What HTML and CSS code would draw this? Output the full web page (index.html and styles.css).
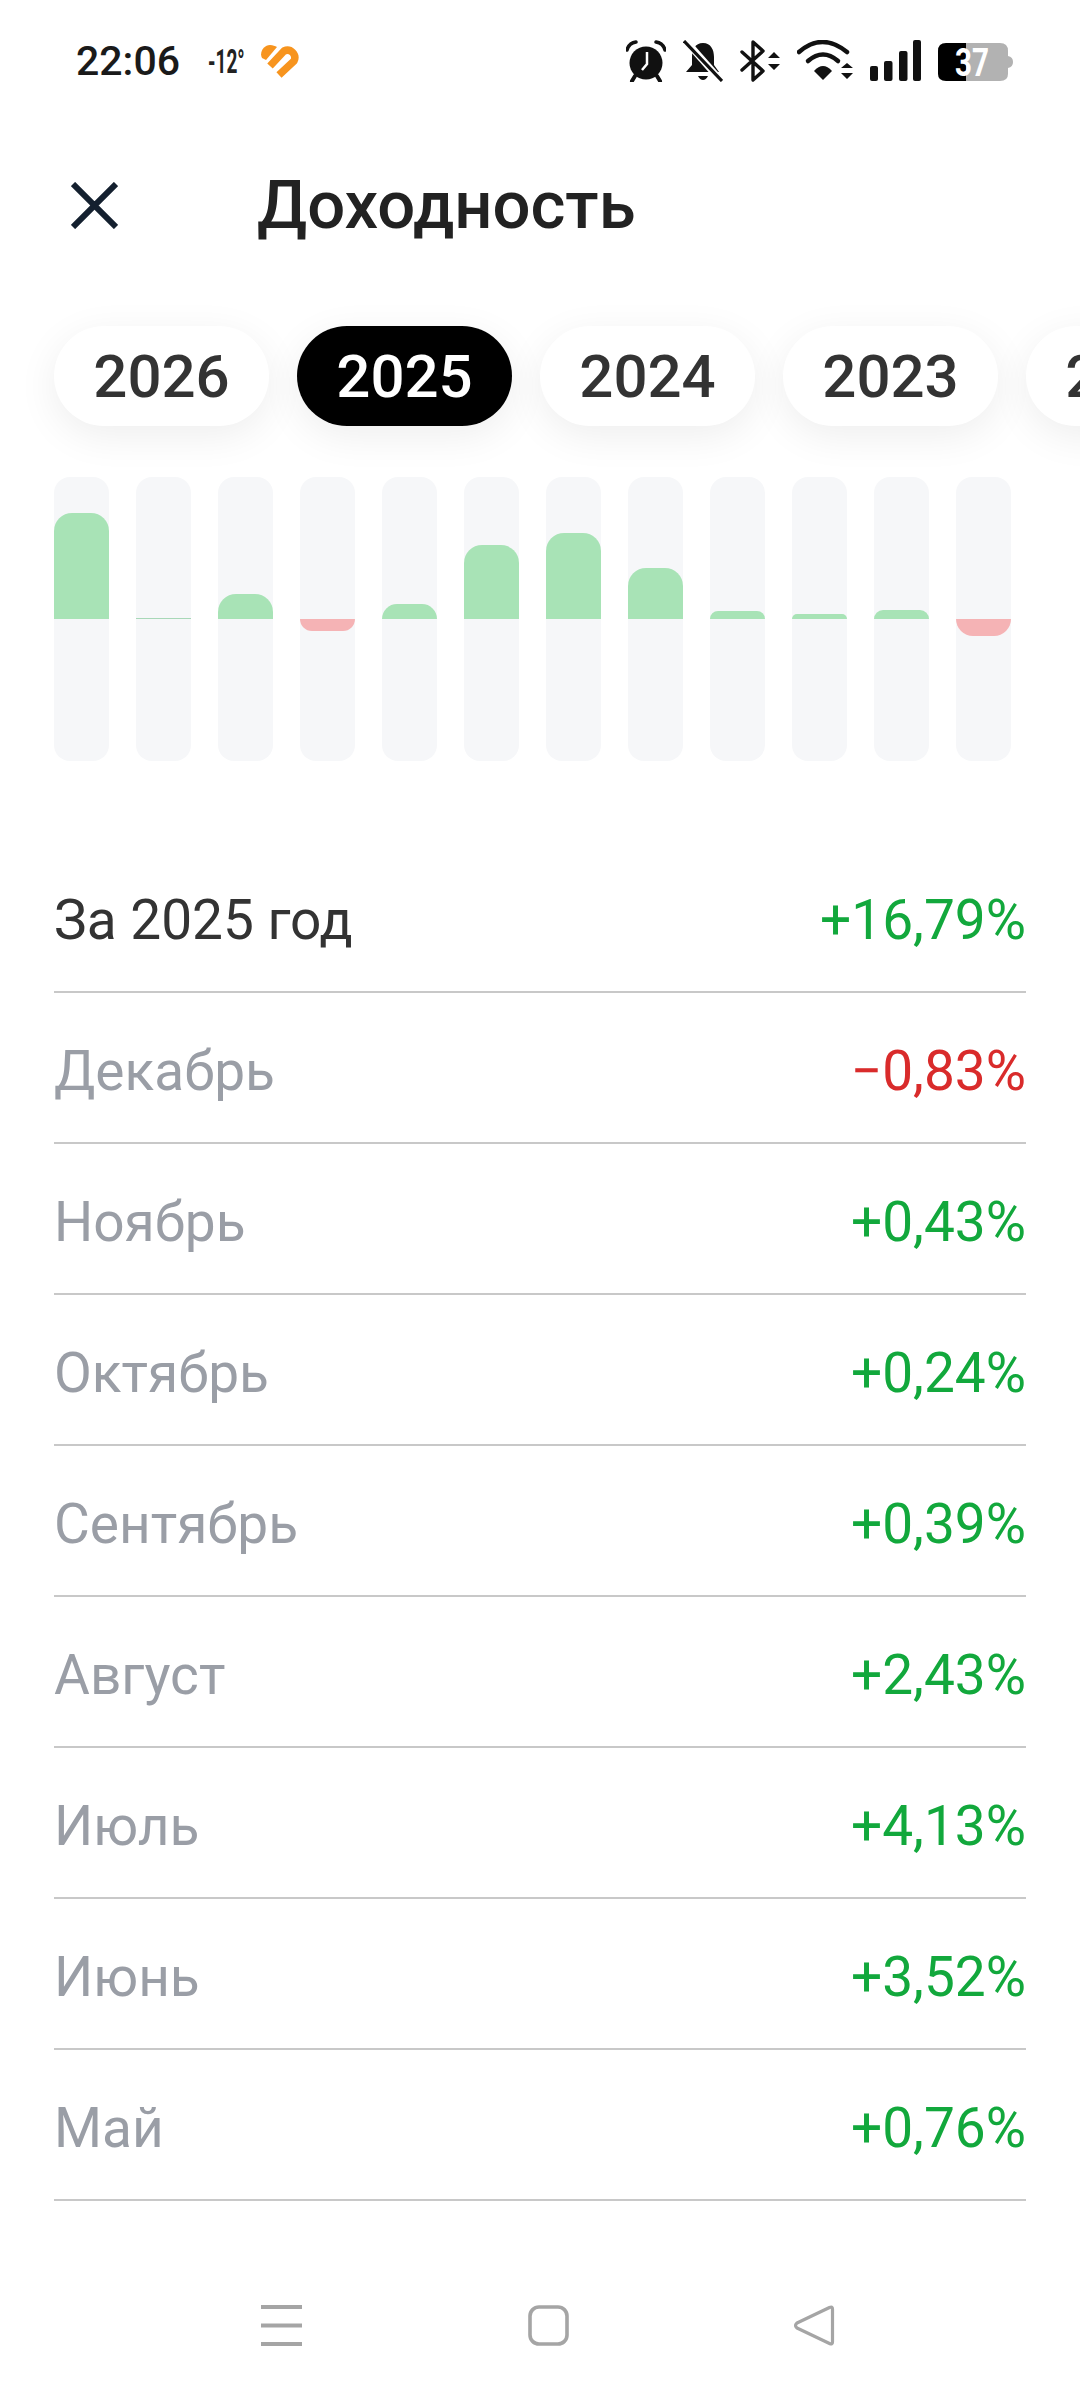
FILE: index.html
```html
<!DOCTYPE html>
<html lang="ru">
<head>
    <meta charset="UTF-8">
    <meta name="viewport" content="width=device-width, initial-scale=1.0">
    <title>Доходность</title>
    <link rel="stylesheet" href="styles.css">
</head>
<body>
    <div class="status-bar">
        <div class="status-left">
            <span class="status-time">22:06</span>
            <span class="status-temp">-12°</span>
            <svg class="status-heart" width="38" height="33" viewBox="0 0 38 33">
                <path d="M1 13 C-2 7 3 0 9 0 C12 0 14 1 16 2 L5 15 Z" fill="#f7941e"/>
                <path d="M9 21 L23 6 A7.500 7.500 0 0 1 33 16 L18 30" fill="none" stroke="#f7941e" stroke-width="7.500"/>
            </svg>
        </div>
        <div class="status-right">
            <!-- будильник -->
            <svg width="40" height="42" viewBox="0 0 40 42">
                <circle cx="20" cy="23" r="16.5" fill="#111"/>
                <path d="M21 12 V24 L16 30" fill="none" stroke="#fff" stroke-width="2.5"/>
                <path d="M1 10 Q3 3 10 2 M39 10 Q37 3 30 2" fill="none" stroke="#111" stroke-width="3.5" stroke-linecap="round"/>
                <path d="M9 36 L6 41 M31 36 L34 41" stroke="#111" stroke-width="4" stroke-linecap="round"/>
            </svg>
            <!-- звук выключен -->
            <svg width="40" height="42" viewBox="0 0 40 42">
                <path d="M20 3 C28 3 31 10 31 17 V25 L36 32 H3 L9 25 V17 C9 10 12 3 20 3 Z" fill="#111"/>
                <path d="M15 36 H25 Q23 40 20 40 Q17 40 15 36 Z" fill="#111"/>
                <path d="M2 0 L39 42" stroke="#fff" stroke-width="7"/>
                <path d="M1 1 L39 41" stroke="#111" stroke-width="3.2"/>
            </svg>
            <!-- bluetooth -->
            <svg width="40" height="42" viewBox="0 0 40 42">
                <path d="M2 12 L23 31 L13 40 V2 L23 11 L2 30" fill="none" stroke="#111" stroke-width="3.4" stroke-linecap="round" stroke-linejoin="round"/>
                <path d="M28 18 L34 12 L40 18 Z M28 24 H40 L34 30 Z" fill="#111"/>
            </svg>
            <!-- wifi -->
            <svg width="56" height="42" viewBox="0 0 56 42">
                <path d="M2 12 Q25 -8 50 12" fill="none" stroke="#111" stroke-width="4.5" stroke-linecap="round"/>
                <path d="M11 21 Q26 8 41 21" fill="none" stroke="#111" stroke-width="4.5" stroke-linecap="round"/>
                <path d="M17 31 Q26 21 35 31 L26 40 Z" fill="#111"/>
                <path d="M44 28 L50 23 L56 28 Z M44 33 H56 L50 39 Z" fill="#111"/>
            </svg>
            <!-- сигнал -->
            <svg width="51" height="42" viewBox="0 0 51 42">
                <rect x="0" y="26" width="8" height="15" rx="2" fill="#111"/>
                <rect x="14" y="21" width="8.5" height="20" rx="2" fill="#111"/>
                <rect x="29" y="11" width="8.5" height="30" rx="2" fill="#111"/>
                <rect x="43" y="0" width="8" height="41" rx="2" fill="#111"/>
            </svg>
            <!-- батарея -->
            <svg width="75" height="42" viewBox="0 0 75 42">
                <path d="M28 3 H62 Q70 3 70 11 V34 Q70 41 62 41 H28 Z" fill="#b2b2b2"/>
                <path d="M70 16 Q75 17 75 22 Q75 27 70 28 Z" fill="#b2b2b2"/>
                <path d="M28 3 H8 Q0 3 0 11 V34 Q0 41 8 41 H28 Z" fill="#000"/>
                <text class="battery-text" x="17" y="36" textLength="34" lengthAdjust="spacingAndGlyphs">37</text>
            </svg>
        </div>
    </div>

    <div class="header">
        <svg class="header-close" width="47" height="47" viewBox="0 0 47 47">
            <path d="M2 2 L45 45 M45 2 L2 45" fill="none" stroke="#14202f" stroke-width="6"/>
        </svg>
        <h1 class="header-title">Доходность</h1>
    </div>

    <div class="years">
        <div class="year">2026</div>
        <div class="year year-active">2025</div>
        <div class="year">2024</div>
        <div class="year">2023</div>
        <div class="year">2022</div>
    </div>

    <div class="chart">
        <div class="bar"><div class="bar-half bar-up"><div class="fill fill-plus" style="height:106px"></div></div><div class="bar-half"></div></div>
        <div class="bar"><div class="bar-half bar-up"><div class="fill fill-zero" style="height:1px"></div></div><div class="bar-half"></div></div>
        <div class="bar"><div class="bar-half bar-up"><div class="fill fill-plus" style="height:25px"></div></div><div class="bar-half"></div></div>
        <div class="bar"><div class="bar-half bar-up"></div><div class="bar-half"><div class="fill fill-minus" style="height:12px"></div></div></div>
        <div class="bar"><div class="bar-half bar-up"><div class="fill fill-plus" style="height:15px"></div></div><div class="bar-half"></div></div>
        <div class="bar"><div class="bar-half bar-up"><div class="fill fill-plus" style="height:74px"></div></div><div class="bar-half"></div></div>
        <div class="bar"><div class="bar-half bar-up"><div class="fill fill-plus" style="height:86px"></div></div><div class="bar-half"></div></div>
        <div class="bar"><div class="bar-half bar-up"><div class="fill fill-plus" style="height:51px"></div></div><div class="bar-half"></div></div>
        <div class="bar"><div class="bar-half bar-up"><div class="fill fill-plus" style="height:8px"></div></div><div class="bar-half"></div></div>
        <div class="bar"><div class="bar-half bar-up"><div class="fill fill-plus" style="height:5px"></div></div><div class="bar-half"></div></div>
        <div class="bar"><div class="bar-half bar-up"><div class="fill fill-plus" style="height:9px"></div></div><div class="bar-half"></div></div>
        <div class="bar"><div class="bar-half bar-up"></div><div class="bar-half"><div class="fill fill-minus" style="height:17px"></div></div></div>
    </div>

    <ul class="list">
        <li class="row row-total"><span>За 2025 год</span><span class="plus">+16,79%</span></li>
        <li class="row"><span>Декабрь</span><span class="minus">−0,83%</span></li>
        <li class="row"><span>Ноябрь</span><span class="plus">+0,43%</span></li>
        <li class="row"><span>Октябрь</span><span class="plus">+0,24%</span></li>
        <li class="row"><span>Сентябрь</span><span class="plus">+0,39%</span></li>
        <li class="row"><span>Август</span><span class="plus">+2,43%</span></li>
        <li class="row"><span>Июль</span><span class="plus">+4,13%</span></li>
        <li class="row"><span>Июнь</span><span class="plus">+3,52%</span></li>
        <li class="row"><span>Май</span><span class="plus">+0,76%</span></li>
    </ul>

    <div class="nav-bar">
        <svg width="41" height="41" viewBox="0 0 41 41">
            <path d="M0 2 H41 M0 20.500 H41 M0 39 H41" stroke="#a5a5a5" stroke-width="4"/>
        </svg>
        <svg width="41" height="41" viewBox="0 0 41 41">
            <rect x="2" y="2" width="37" height="37" rx="9" fill="none" stroke="#a5a5a5" stroke-width="3.6"/>
        </svg>
        <svg width="41" height="41" viewBox="0 0 41 41">
            <path d="M38.500 4 Q38.500 1 35.500 2.500 L3 18 Q0 20.500 3 23 L35.500 38.500 Q38.500 40 38.500 37 Z" fill="none" stroke="#a5a5a5" stroke-width="3.2" stroke-linejoin="round"/>
        </svg>
    </div>
</body>
</html>
```

FILE: styles.css
```css
* {
    margin: 0;
    padding: 0;
    box-sizing: border-box;
}

html,
body {
    width: 1080px;
    height: 2400px;
    overflow: hidden;
}

body {
    display: flex;
    flex-direction: column;
    font-family: Roboto, "Noto Sans", sans-serif;
    background-color: #fff;
}

.status-bar {
    height: 122px;
    flex: none;
    padding: 0 67px 0 76px;
    display: flex;
    align-items: center;
    justify-content: space-between;
}

.status-left {
    display: flex;
    align-items: center;
}

.status-time {
    font-size: 41px;
    font-weight: 500;
    color: #1a1a1a;
}

.status-temp {
    width: 34px;
    margin-left: 28px;
    font-size: 34px;
    font-weight: 700;
    white-space: nowrap;
    color: #222;
    transform: scaleX(.56);
    transform-origin: left center;
}

.status-heart {
    margin-left: 19px;
}

.status-right {
    display: flex;
    align-items: center;
    gap: 17px;
}

.battery-text {
    font-family: Roboto, sans-serif;
    font-size: 38px;
    font-weight: 700;
    fill: #fff;
}

.header {
    height: 166px;
    flex: none;
    padding-left: 71px;
    display: flex;
    align-items: center;
    gap: 139px;
}

.header-title {
    font-size: 67px;
    font-weight: 500;
    color: #222;
}

.years {
    flex: none;
    padding: 38px 0 46px 54px;
    display: flex;
    gap: 28px;
    overflow: hidden;
}

.year {
    width: 215px;
    height: 100px;
    flex: none;
    line-height: 102px;
    text-align: center;
    font-size: 60px;
    font-weight: 500;
    color: #333;
    border-radius: 50px;
    background-color: #fff;
    box-shadow: 0 10px 40px rgba(0,0,0,.07);
}

.year-active {
    color: #fff;
    background-color: #000;
}

.chart {
    height: 284px;
    flex: none;
    margin: 5px 0 81px;
    padding: 0 69px 0 54px;
    display: flex;
    justify-content: space-between;
}

.bar {
    width: 55px;
    display: flex;
    flex-direction: column;
    border-radius: 16px;
    overflow: hidden;
    background-color: #f6f7f9;
}

.bar-half {
    height: 142px;
    display: flex;
    flex-direction: column;
}

.bar-up {
    justify-content: flex-end;
}

.fill-plus {
    border-radius: 18px 18px 0 0;
    background-color: #a8e3b6;
}

.fill-minus {
    border-radius: 0 0 18px 18px;
    background-color: #f5b3b5;
}

.fill-zero {
    background-color: #a8d8b8;
}

.list {
    margin: 0 54px;
    list-style: none;
}

.row {
    height: 151px;
    padding-top: 6px;
    display: flex;
    align-items: center;
    justify-content: space-between;
    font-size: 55px;
    color: #9a9ea6;
    border-bottom: 2px solid #c8c8c8;
}

.row-total {
    color: #333;
}

.plus {
    color: #12a83c;
}

.minus {
    color: #d92b2b;
}

.nav-bar {
    height: 150px;
    flex: none;
    margin-top: auto;
    padding: 0 245px 0 261px;
    display: flex;
    align-items: center;
    justify-content: space-between;
}
```
